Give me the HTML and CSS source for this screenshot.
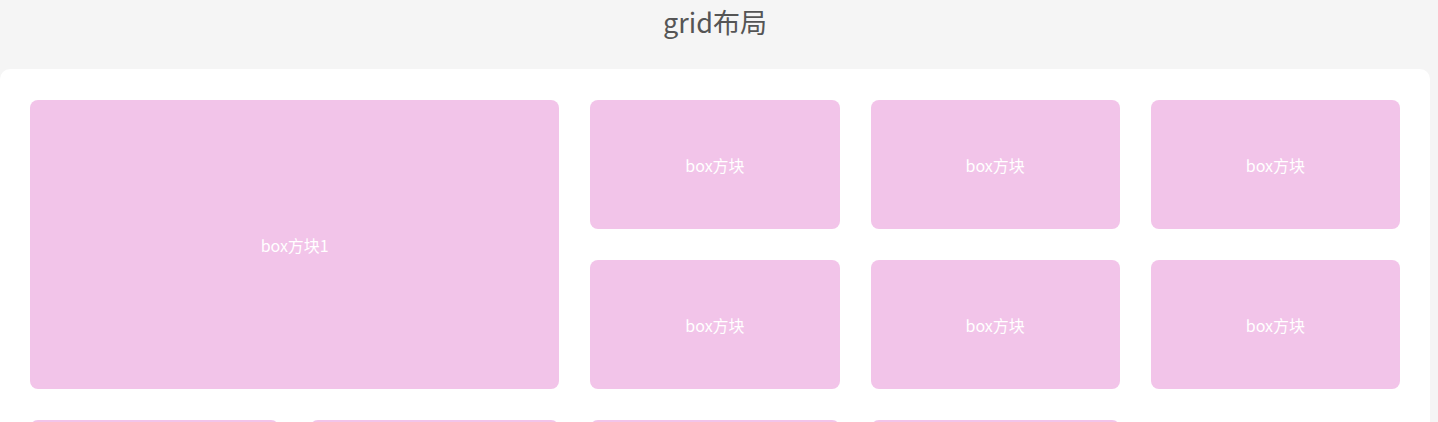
FILE: index.html
```html
<!DOCTYPE html>
<html lang="zh">
<head>
<meta charset="utf-8">
<title>grid布局</title>
<link rel="stylesheet" href="styles.css">
</head>
<body>
<div class="page">
  <header class="header">
    <h1 class="title">grid布局</h1>
  </header>
  <main class="card">
    <div class="grid">
      <div class="box box-big">box方块1</div>
      <div class="box">box方块</div>
      <div class="box">box方块</div>
      <div class="box">box方块</div>
      <div class="box">box方块</div>
      <div class="box">box方块</div>
      <div class="box">box方块</div>
      <div class="box">box方块</div>
      <div class="box">box方块</div>
      <div class="box">box方块</div>
      <div class="box">box方块</div>
    </div>
  </main>
</div>
</body>
</html>
```

FILE: styles.css
```css
html, body {
  margin: 0;
  padding: 0;
  background: #f5f5f5;
  overflow: hidden;
}
body {
  font-family: "Noto Sans CJK SC", "Noto Sans", sans-serif;
}
.page {
  width: 1430px;
}
.header {
  height: 69px;
  display: flex;
  justify-content: center;
}
.title {
  margin: 0;
  font-size: 27px;
  font-weight: 400;
  line-height: 44px;
  color: #555555;
}
.card {
  background: #ffffff;
  border-radius: 10px;
  padding: 31px 30px 30px;
  min-height: 600px;
}
.grid {
  display: grid;
  grid-template-columns: repeat(5, 1fr);
  grid-auto-rows: 129px;
  gap: 31px 31px;
}
.box {
  background: #f2c4e9;
  border-radius: 8px;
  color: #ffffff;
  font-size: 16px;
  display: flex;
  align-items: center;
  justify-content: center;
}
.box-big {
  grid-column: span 2;
  grid-row: span 2;
}
```
